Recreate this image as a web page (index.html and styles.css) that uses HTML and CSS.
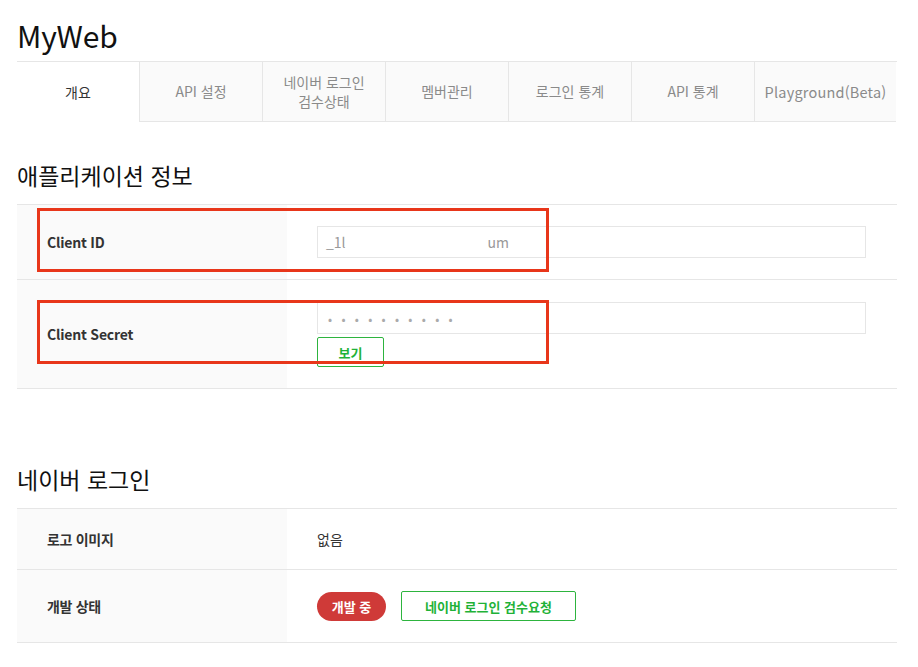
FILE: index.html
```html
<!DOCTYPE html>
<html lang="ko">
<head>
<meta charset="utf-8">
<title>MyWeb</title>
<link rel="stylesheet" href="styles.css">
</head>
<body>
<div class="page">
  <h1 class="title">MyWeb</h1>
  <ul class="tabs">
    <li class="tab active">개요</li>
    <li class="tab">API 설정</li>
    <li class="tab">네이버 로그인<br>검수상태</li>
    <li class="tab">멤버관리</li>
    <li class="tab">로그인 통계</li>
    <li class="tab">API 통계</li>
    <li class="tab last">Playground(Beta)</li>
  </ul>

  <h2 class="section-title first">애플리케이션 정보</h2>
  <div class="table">
    <div class="row row-id">
      <div class="label latin">Client ID</div>
      <div class="value">
        <div class="field"><span>_1l</span><span class="mask"></span><span>um</span></div>
      </div>
    </div>
    <div class="row row-secret">
      <div class="label latin">Client Secret</div>
      <div class="value">
        <div class="field dots"><span>•</span><span>•</span><span>•</span><span>•</span><span>•</span><span>•</span><span>•</span><span>•</span><span>•</span><span>•</span></div>
        <button class="btn-green small">보기</button>
      </div>
    </div>
    <div class="highlight hl-1"></div>
    <div class="highlight hl-2"></div>
  </div>

  <h2 class="section-title second">네이버 로그인</h2>
  <div class="table">
    <div class="row row-logo">
      <div class="label">로고 이미지</div>
      <div class="value center">없음</div>
    </div>
    <div class="row row-state">
      <div class="label">개발 상태</div>
      <div class="value center inline">
        <span class="badge">개발 중</span>
        <button class="btn-green wide">네이버 로그인 검수요청</button>
      </div>
    </div>
  </div>
</div>
</body>
</html>
```

FILE: styles.css
```css
* { box-sizing: border-box; }
html, body { margin: 0; padding: 0; background: #fff; }
body {
  font-family: "Noto Sans CJK KR", "Noto Sans", sans-serif;
  color: #333;
}
.page {
  width: 880px;
  margin-left: 17px;
  padding-top: 17px;
}
.title {
  margin: 0 0 8px;
  font-size: 30px;
  line-height: 36px;
  font-weight: 400;
  color: #111;
  letter-spacing: -0.2px;
}
.tabs {
  list-style: none;
  margin: 0;
  padding: 0;
  display: flex;
  height: 61px;
  border-top: 1px solid #e6e6e6;
}
.tab {
  width: 123px;
  height: 60px;
  display: flex;
  align-items: center;
  justify-content: center;
  text-align: center;
  font-size: 14px;
  line-height: 19px;
  color: #8a8a8a;
  background: #fafafa;
  border-left: 1px solid #e6e6e6;
  border-bottom: 1px solid #e6e6e6;
}
.tab.active {
  width: 122px;
  background: #fff;
  color: #333;
  border-left: none;
  border-bottom: none;
}
.tab.last { width: 142px; letter-spacing: 0.2px; font-size: 14.5px; }

.section-title {
  margin: 0;
  font-size: 23px;
  line-height: 30px;
  font-weight: 400;
  color: #111;
}
.section-title.first { margin-top: 38px; margin-bottom: 14px; }
.section-title.second { margin-top: 75px; margin-bottom: 14px; }

.table {
  position: relative;
  border-top: 1px solid #e6e6e6;
}
.row {
  display: flex;
  border-bottom: 1px solid #e6e6e6;
}
.label {
  width: 270px;
  flex: none;
  background: #fafafa;
  padding-left: 30px;
  display: flex;
  align-items: center;
  font-size: 14px;
  font-weight: 700;
  color: #333;
  letter-spacing: -0.3px;
}
.label.latin { font-weight: 600; letter-spacing: -0.2px; }
.value {
  flex: 1;
  padding: 21px 31px 21px 30px;
}
.row-secret .value { padding-top: 22px; padding-bottom: 21px; }
.field {
  height: 32px;
  border: 1px solid #e6e6e6;
  padding-left: 8px;
  display: flex;
  align-items: center;
  font-size: 14px;
  color: #999;
}
.mask { display: inline-block; width: 142px; }
.dots { padding-left: 10px; }
.dots span {
  width: 13.4px;
  display: inline-block;
  text-align: left;
  font-size: 12px;
  color: #aaa;
}
.btn-green {
  font-family: inherit;
  background: #fff;
  border: 1px solid #2db43e;
  color: #1fb238;
  border-radius: 2px;
  padding: 0;
  cursor: pointer;
}
.btn-green.small {
  display: block;
  margin-top: 3px;
  width: 67px;
  height: 30px;
  font-size: 13px;
  font-weight: 700;
}
.btn-green.wide {
  width: 175px;
  height: 30px;
  font-size: 13px;
  font-weight: 700;
  margin-left: 15px;
}
.value.center {
  display: flex;
  align-items: center;
  font-size: 14px;
  color: #333;
}
.row-logo .value { height: 60px; padding-top: 0; padding-bottom: 0; }
.row-state .value { height: 72px; padding-top: 0; padding-bottom: 0; }
.badge {
  display: inline-flex;
  align-items: center;
  justify-content: center;
  width: 69px;
  height: 29px;
  border-radius: 15px;
  background: #cf3a38;
  color: #fff;
  font-size: 13px;
  font-weight: 700;
}
.highlight {
  position: absolute;
  left: 20px;
  width: 512px;
  height: 64px;
  border: 3px solid #e8361a;
  pointer-events: none;
}
.hl-1 { top: 3px; }
.hl-2 { top: 95px; }
```
